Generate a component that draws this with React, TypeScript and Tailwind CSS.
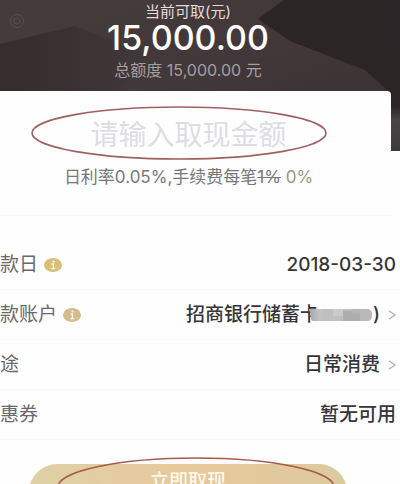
import type { ReactNode } from "react";

function InfoIcon({ className }: { className: string }) {
  return (
    <svg className={className} width="18" height="14" viewBox="0 0 18 14" aria-hidden="true">
      <ellipse cx="9" cy="7" rx="9" ry="7" fill="currentColor" />
      <ellipse cx="9.6" cy="3.6" rx="1.2" ry="1" fill="#fffaf0" />
      <path d="M7.6 6h1.8v4.6M7.4 10.6h3.8" fill="none" stroke="#fffaf0" strokeWidth="1.3" />
    </svg>
  );
}

function Chevron() {
  return (
    <svg className="ml-2 shrink-0" width="8" height="10" viewBox="0 0 8 10" aria-hidden="true">
      <path d="M1 .8 7 5 1 9.2" fill="none" stroke="#a9a9ad" strokeWidth="1.1" />
    </svg>
  );
}

function Mosaic() {
  return (
    <svg className="-ml-3 shrink-0" width="66" height="14" viewBox="0 0 66 14" aria-hidden="true">
      <defs>
        <linearGradient id="mosaic-start" x1="0" y1="0" x2="1" y2="0">
          <stop offset="0" stopColor="#a2a2a6" />
          <stop offset="1" stopColor="#c6c6ca" />
        </linearGradient>
        <clipPath id="mosaic">
          <path d="M2 1h59q4 1 4 6t-4 6H6q-3-2-2-5z" />
        </clipPath>
      </defs>
      <g clipPath="url(#mosaic)">
        <rect width="66" height="14" fill="#c0c0c3" />
        <rect width="14" height="14" fill="url(#mosaic-start)" />
        <rect x="26" width="10" height="8" fill="#cbcbce" />
        <rect x="36" y="3" width="17" height="11" fill="#adadb0" />
        <rect x="45" width="8" height="6" fill="#b5b5b8" />
        <rect x="53" width="13" height="14" fill="#b9b9bc" />
      </g>
    </svg>
  );
}

function Row({ label, icon, children }: { label: string; icon?: ReactNode; children: ReactNode }) {
  return (
    <div className="flex h-[50px] items-center justify-between border-b border-[#fafafa] pr-1 text-[19px] leading-6">
      <dt className="flex items-center text-[#69696d]">
        {label}
        {icon}
      </dt>
      <dd className="flex items-center font-medium text-[#36363a]">{children}</dd>
    </div>
  );
}

export default function App() {
  return (
    <main className="h-screen overflow-hidden bg-[#fefefe] font-['Inter','Noto_Sans_CJK_SC',sans-serif]">
      <header className="relative h-[151px] overflow-hidden bg-[#41383a] text-center">
        <svg
          className="absolute inset-0 h-full w-full"
          viewBox="0 0 400 151"
          preserveAspectRatio="none"
          aria-hidden="true"
        >
          <defs>
            <linearGradient id="backdrop" x1="0" y1="0" x2="1" y2="1">
              <stop offset="0" stopColor="#443c3b" />
              <stop offset=".5" stopColor="#423739" />
              <stop offset="1" stopColor="#383033" />
            </linearGradient>
            <linearGradient id="ridge" x1="0" y1="0" x2="1" y2="0">
              <stop offset="0" stopColor="#352c2b" />
              <stop offset="1" stopColor="#40383a" />
            </linearGradient>
            <linearGradient id="edge" x1="0" y1="0" x2="0" y2="1">
              <stop offset="0" stopColor="#2a2526" />
              <stop offset=".7" stopColor="#2b2526" />
              <stop offset=".8" stopColor="#474546" />
              <stop offset="1" stopColor="#3c3a3b" />
            </linearGradient>
          </defs>
          <rect width="400" height="151" fill="url(#backdrop)" />
          <path d="M0 44 75 26 150 55 119 91H0z" fill="url(#ridge)" />
          <path d="M284 0 258 19 290 41 365 70 388 91h12V0z" fill="#2b2526" />
          <rect x="388" width="12" height="151" fill="url(#edge)" />
          <circle cx="17" cy="21" r="6.5" fill="none" stroke="#574d4c" strokeWidth="1" />
          <circle cx="17" cy="21" r="3" fill="none" stroke="#574d4c" strokeWidth="1" />
        </svg>
        <div className="relative mr-6 pt-1">
          <p className="text-[15px] leading-4 text-[#e2dcdd]">当前可取(元)</p>
          <p className="text-[34px] font-medium leading-9 text-white">15,000.00</p>
          <p className="mt-0.5 text-[16px] leading-6 text-[#a69fa0]">总额度 15,000.00 元</p>
        </div>
      </header>

      <section className="relative -mt-[60px] mr-[9px] h-[125px] rounded-tr-sm border-b border-[#f9f9f9] bg-[#fefefe] pr-[14px] pt-6 text-center">
        <input
          type="text"
          aria-label="取现金额"
          placeholder="请输入取现金额"
          className="block h-10 w-full bg-transparent text-center text-[28px] outline-none placeholder:text-[#dddde3]"
        />
        <p className="mt-3 text-[17px] leading-5 text-[#77777a]">
          日利率0.05%,手续费每笔<s>1%</s> <span className="text-[#999883]">0%</span>
        </p>
        <svg
          className="pointer-events-none absolute left-[30px] top-[14px]"
          width="298"
          height="56"
          viewBox="0 0 298 56"
          aria-hidden="true"
        >
          <ellipse cx="149" cy="28" rx="147" ry="26" fill="none" stroke="#a0605f" strokeWidth="1.6" />
        </svg>
      </section>

      <dl className="mt-6">
        <Row label="款日" icon={<InfoIcon className="ml-1.5 text-[#d8c078]" />}>
          2018-03-30
        </Row>
        <Row label="款账户" icon={<InfoIcon className="ml-1.5 text-[#d6bb8c]" />}>
          招商银行储蓄卡
          <Mosaic />)
          <Chevron />
        </Row>
        <Row label="途">
          日常消费
          <Chevron />
        </Row>
        <Row label="惠券">暂无可用</Row>
      </dl>

      <div className="relative ml-[29px] mr-[53px] mt-6">
        <button
          type="button"
          className="block h-14 w-full rounded-[28px] bg-linear-to-r from-[#ded0a6] via-[#e8c99b] to-[#dcca9e] pb-5 text-[19px] font-medium leading-9 text-[#fffaf0]"
        >
          立即取现
        </button>
        <svg
          className="pointer-events-none absolute -top-2 left-[27px]"
          width="280"
          height="62"
          viewBox="0 0 280 62"
          aria-hidden="true"
        >
          <ellipse cx="140" cy="31" rx="138" ry="29" fill="none" stroke="#a85a4c" strokeWidth="1.6" />
        </svg>
      </div>
    </main>
  );
}
